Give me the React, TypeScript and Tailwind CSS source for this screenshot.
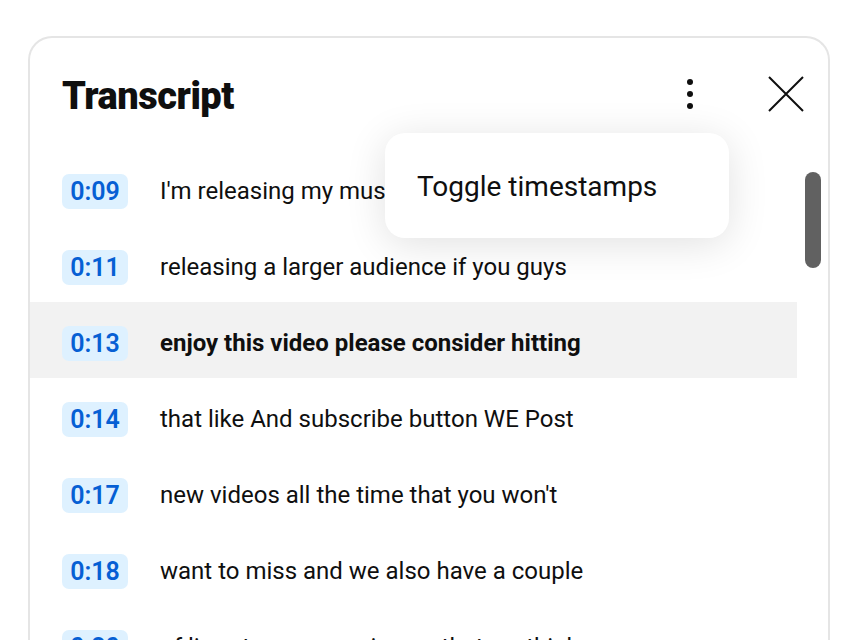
const lines = [
  { t: '0:09', text: "I'm releasing my music to" },
  { t: '0:11', text: 'releasing a larger audience if you guys' },
  { t: '0:13', text: 'enjoy this video please consider hitting', active: true },
  { t: '0:14', text: 'that like And subscribe button WE Post' },
  { t: '0:17', text: "new videos all the time that you won't" },
  { t: '0:18', text: 'want to miss and we also have a couple' },
  { t: '0:20', text: 'of live streams coming up that we think' },
];

export default function App() {
  return (
    <div className="h-[640px] overflow-hidden bg-white pt-[36px] pl-[28px] pr-[20px] font-['Roboto',sans-serif] text-[#0f0f0f]">
      <div className="relative h-[700px] rounded-t-[24px] border-2 border-b-0 border-[#e5e5e5] bg-white">
        <header className="flex h-[112px] items-start pl-[32px] pr-[24px]">
          <h1 className="mt-[34px] text-[38px] leading-[48px] font-black tracking-[-0.5px]">Transcript</h1>
          <div className="ml-auto mt-[38px] flex items-center gap-[75px]">
            <div className="flex flex-col gap-[6px]">
              <span className="h-[6px] w-[6px] rounded-full bg-[#0f0f0f]" />
              <span className="h-[6px] w-[6px] rounded-full bg-[#0f0f0f]" />
              <span className="h-[6px] w-[6px] rounded-full bg-[#0f0f0f]" />
            </div>
            <svg width="36" height="36" viewBox="0 0 36 36" fill="none" stroke="#0f0f0f" strokeWidth="2">
              <path d="M1 1L35 35M35 1L1 35" />
            </svg>
          </div>
        </header>

        <div className="flex">
          <ul className="w-[767px]">
            {lines.map((l) => (
              <li
                key={l.t}
                className={`flex h-[76px] items-start gap-[32px] pl-[32px] pt-[24px] ${l.active ? 'bg-[#f2f2f2]' : ''}`}
              >
                <span className="flex h-[35px] w-[66px] items-center justify-center rounded-[7px] bg-[#def1ff] text-[25px] font-semibold text-[#065fd4]">
                  {l.t}
                </span>
                <span className={`whitespace-nowrap text-[24px] leading-[35px] ${l.active ? 'font-bold' : ''}`}>{l.text}</span>
              </li>
            ))}
          </ul>
          <div className="flex-1 pl-[8px] pt-[22px]">
            <div className="h-[96px] w-[16px] rounded-full bg-[#616161]" />
          </div>
        </div>

        <div className="absolute left-[355px] top-[95px] w-[344px] rounded-[20px] bg-white pt-[38px] pb-[35px] pl-[32px] shadow-[0_6px_40px_rgba(0,0,0,0.12)]">
          <span className="block text-[28px] leading-[32px]">Toggle timestamps</span>
        </div>
      </div>
    </div>
  );
}
